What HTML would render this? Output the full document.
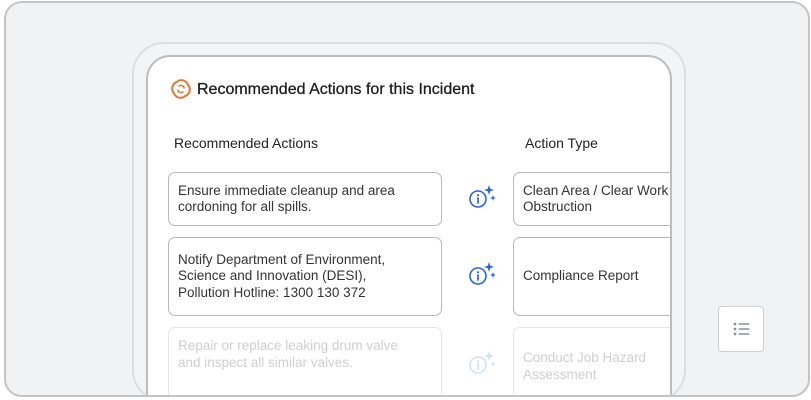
<!DOCTYPE html>
<html><head><style>
*{box-sizing:border-box;margin:0;padding:0}
html,body{width:811px;height:400px;overflow:hidden}
body{background:#fff;font-family:"Liberation Sans",sans-serif;position:relative}
.frame{position:absolute;left:4px;top:1px;width:806px;height:396px;border:2px solid #c4c4c4;border-radius:18px;background:#f1f2f3;overflow:hidden}
.ring{position:absolute;left:126px;top:39px;width:554px;height:360px;border:2px solid #dedede;border-radius:32px;background:#f3f4f5}
.card{position:absolute;left:140px;top:52px;width:526px;height:345px;border:2px solid #bdbdbd;border-bottom:none;border-radius:24px 24px 0 0;background:#fff;overflow:hidden}
.t{position:absolute;font-size:15px;color:#222;white-space:nowrap}
.box{position:absolute;border:1.5px solid #b9b9b9;border-radius:7px;padding:0 9px;font-size:13.5px;color:#333;line-height:16.5px;display:flex;align-items:center}
.fade{border-color:#e6e6e6;color:#cfcfcf}
.ic{position:absolute}
.lst{position:absolute;left:718px;top:306px;width:46px;height:46px;border:1px solid #d0d0d0;border-radius:4px;background:#fff}
</style></head><body>
<div class="frame">
<div class="ring"></div>
<div class="card">
<svg style="position:absolute;left:22px;top:21px" width="22" height="22" viewBox="0 0 22 22" fill="none" stroke="#e8762c" stroke-width="2" stroke-linecap="round">
<path d="M8 3 C12 1 17 3 18 7"/><path d="M19 8 C21 12 19 17 15 18"/><path d="M14 19 C10 21 5 19 4 15"/><path d="M3 14 C1 10 3 5 7 4"/>
<path d="M9 8 C11 6.5 14 8 14 10" stroke-width="1.5"/><path d="M13 14 C11 15.5 8 14 8 12" stroke-width="1.5"/>
</svg>
<div class="t" style="left:49px;top:24px;font-size:16px;color:#1e1e1e;-webkit-text-stroke:.3px #1e1e1e">Recommended Actions for this Incident</div>
<div class="t" style="left:26px;top:78px;font-size:14px">Recommended Actions</div>
<div class="t" style="left:377px;top:78px;font-size:14px">Action Type</div>
<div class="box" style="left:20px;top:115px;width:274px;height:54px">Ensure immediate cleanup and area<br>cordoning for all spills.</div>
<div class="box" style="left:20px;top:180px;width:274px;height:79px">Notify Department of Environment,<br>Science and Innovation (DESI),<br>Pollution Hotline: 1300 130 372</div>
<div class="box fade" style="left:20px;top:270px;width:274px;height:80px;align-items:flex-start;padding-top:10px">Repair or replace leaking drum valve<br>and inspect all similar valves.</div>
<div class="box" style="left:365px;top:115px;width:180px;height:54px">Clean Area / Clear Work<br>Obstruction</div>
<div class="box" style="left:365px;top:180px;width:180px;height:79px">Compliance Report</div>
<div class="box fade" style="left:365px;top:270px;width:180px;height:80px;align-items:flex-start;padding-top:22px">Conduct Job Hazard<br>Assessment</div>
<svg class="ic" style="left:318px;top:127px" width="32" height="26" viewBox="0 0 32 26"><circle cx="12" cy="15" r="8" fill="none" stroke="#2563eb" stroke-width="1.6"/><circle cx="12" cy="11.2" r="1.1" fill="#2563eb"/><path d="M12 14v5" stroke="#2563eb" stroke-width="1.7" stroke-linecap="round"/><path d="M23 1 L24.2 4.8 L28 6 L24.2 7.2 L23 11 L21.8 7.2 L18 6 L21.8 4.8Z" fill="#2563eb"/><path d="M27 11 L27.8 13.2 L30 14 L27.8 14.8 L27 17 L26.2 14.8 L24 14 L26.2 13.2Z" fill="#2563eb"/></svg>
<svg class="ic" style="left:318px;top:204px" width="32" height="26" viewBox="0 0 32 26"><circle cx="12" cy="15" r="8" fill="none" stroke="#2563eb" stroke-width="1.6"/><circle cx="12" cy="11.2" r="1.1" fill="#2563eb"/><path d="M12 14v5" stroke="#2563eb" stroke-width="1.7" stroke-linecap="round"/><path d="M23 1 L24.2 4.8 L28 6 L24.2 7.2 L23 11 L21.8 7.2 L18 6 L21.8 4.8Z" fill="#2563eb"/><path d="M27 11 L27.8 13.2 L30 14 L27.8 14.8 L27 17 L26.2 14.8 L24 14 L26.2 13.2Z" fill="#2563eb"/></svg>
<svg class="ic" style="left:318px;top:293px;opacity:.2" width="32" height="26" viewBox="0 0 32 26"><circle cx="12" cy="15" r="8" fill="none" stroke="#2563eb" stroke-width="1.6"/><circle cx="12" cy="11.2" r="1.1" fill="#2563eb"/><path d="M12 14v5" stroke="#2563eb" stroke-width="1.7" stroke-linecap="round"/><path d="M23 1 L24.2 4.8 L28 6 L24.2 7.2 L23 11 L21.8 7.2 L18 6 L21.8 4.8Z" fill="#2563eb"/><path d="M27 11 L27.8 13.2 L30 14 L27.8 14.8 L27 17 L26.2 14.8 L24 14 L26.2 13.2Z" fill="#2563eb"/></svg>
</div>
</div>
<div class="lst"><svg style="position:absolute;left:14px;top:14px" width="18" height="16" viewBox="0 0 18 16" fill="#8a8f98"><circle cx="2" cy="3" r="1.4"/><circle cx="2" cy="8" r="1.4"/><circle cx="2" cy="13" r="1.4"/><rect x="5.5" y="2.2" width="11" height="1.6" rx=".8"/><rect x="5.5" y="7.2" width="11" height="1.6" rx=".8"/><rect x="5.5" y="12.2" width="11" height="1.6" rx=".8"/></svg></div>
</body></html>
